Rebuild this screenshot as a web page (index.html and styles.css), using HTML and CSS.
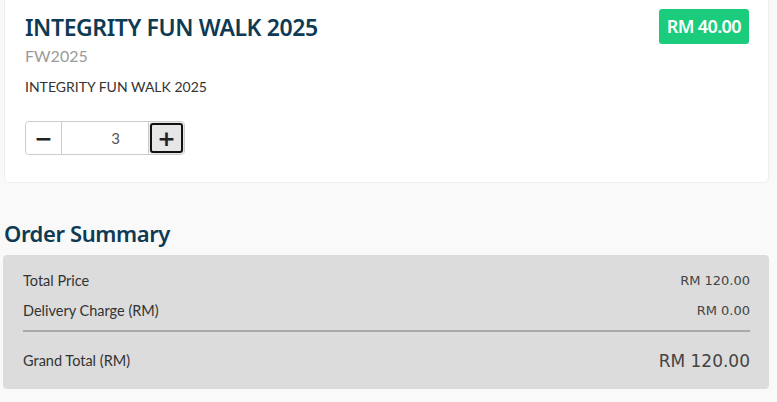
FILE: index.html
```html
<!DOCTYPE html>
<html lang="en">
<head>
  <meta charset="UTF-8" />
  <title>Checkout</title>
  <link rel="stylesheet" href="styles.css">
</head>
<body>
  <div class="page">
    <div class="product-card">
      <div class="product-head">
        <div class="product-info">
          <h1 class="product-title">INTEGRITY FUN WALK 2025</h1>
          <div class="product-code">FW2025</div>
          <p class="product-desc">INTEGRITY FUN WALK 2025</p>
        </div>
        <span class="price-badge">RM 40.00</span>
      </div>
      <div class="qty">
        <button class="qty-btn">&minus;</button>
        <input class="qty-input" type="text" value="3">
        <button class="qty-btn is-focus">+</button>
      </div>
    </div>

    <h2 class="summary-title">Order Summary</h2>
    <div class="summary">
      <div class="summary-row"><span>Total Price</span><span class="val">RM 120.00</span></div>
      <div class="summary-row"><span>Delivery Charge (RM)</span><span class="val">RM 0.00</span></div>
      <hr class="summary-line">
      <div class="summary-row grand"><span>Grand Total (RM)</span><span class="val">RM 120.00</span></div>
    </div>
  </div>
</body>
</html>
```

FILE: styles.css
```css
html, body { margin: 0; padding: 0; }
body {
  background: #f9f9f9;
  font-family: 'Lato', 'Noto Sans', sans-serif;
  color: #333;
}
.page { padding: 0 8px 0 3px; }

.product-card {
  margin: -6px 0 0 1px;
  background: #fff;
  border: 1px solid #eee;
  border-radius: 6px;
  padding: 17px 20px 27px 20px;
}
.product-head { display: flex; justify-content: space-between; align-items: flex-start; }
.product-title {
  margin: 0;
  font-family: 'Noto Sans', sans-serif;
  font-size: 23px; font-weight: 600;
  color: #0e3a53; line-height: 30px;
  letter-spacing: -0.4px;
}
.product-code { color: #9a9a9a; font-size: 16px; margin-top: 5px; line-height: 18px; }
.product-desc { margin: 13px 0 0; font-size: 14px; line-height: 18px; color: #333; }
.price-badge {
  margin-top: -3px; margin-right: -1px;
  background: #1ccc7d; color: #fff;
  font-family: 'Noto Sans', sans-serif;
  font-size: 18px; font-weight: 600;
  line-height: 25px;
  padding: 5px 8px; border-radius: 3px;
  letter-spacing: -0.6px;
}

.qty {
  display: inline-flex; margin-top: 25px;
  border: 1px solid #ccc; border-radius: 4px;
  height: 32px;
}
.qty-btn {
  width: 35px; border: none; background: #fff;
  font-size: 22px; font-weight: 700; color: #222;
  padding: 0; font-family: 'DejaVu Sans', sans-serif;
  border-radius: 4px;
}
.qty-input {
  width: 88px; border: none; border-left: 1px solid #ccc; border-right: 1px solid #ccc;
  padding: 0 28px 0 0; text-align: right; box-sizing: border-box;
  font-size: 15px; color: #555; font-family: 'Lato', sans-serif;
}
.qty-btn.is-focus { background: #e6e6e6; outline: 2px solid #111; outline-offset: -3px; }

.summary-title {
  margin: 35px 0 7px 1px;
  font-family: 'Noto Sans', sans-serif;
  font-size: 22px; font-weight: 600;
  color: #0e3a53; letter-spacing: -0.4px;
  line-height: 30px;
}
.summary {
  background: #dcdcdc; border-radius: 4px;
  padding: 11px 19px 13px 20px;
}
.summary-row {
  display: flex; justify-content: space-between;
  font-size: 14.5px; line-height: 18px; padding: 6px 0;
}
.summary-row .val { font-family: 'DejaVu Sans', sans-serif; font-size: 13px; color: #444; }
.summary-line { border: none; border-top: 2px solid #aaa; margin: 4px 0 14px; }
.summary-row.grand .val { font-size: 17px; }
```
